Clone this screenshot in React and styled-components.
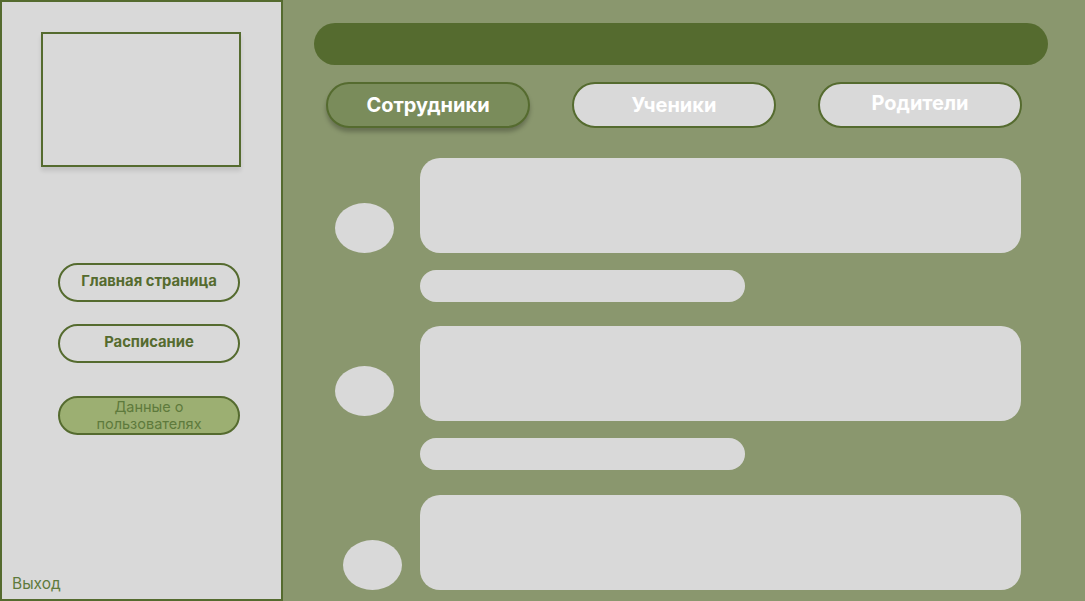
import styled, { createGlobalStyle } from "styled-components";

const GlobalStyle = createGlobalStyle`
  body {
    margin: 0;
    font-family: Inter, "Noto Sans", sans-serif;
  }
`;

const Page = styled.div`
  display: flex;
  width: 1085px;
  height: 601px;
  background: #8a976e;
  overflow: hidden;
`;

const Sidebar = styled.aside`
  box-sizing: border-box;
  width: 283px;
  height: 100%;
  flex-shrink: 0;
  background: #d9d9d9;
  border: 2px solid #556b2f;
  display: flex;
  flex-direction: column;
  padding-top: 30px;
`;

const PhotoBox = styled.div`
  box-sizing: border-box;
  width: 200px;
  height: 135px;
  margin-left: 39px;
  border: 2px solid #556b2f;
  box-shadow: 0 4px 4px rgba(0, 0, 0, 0.1);
`;

const Nav = styled.nav`
  display: flex;
  flex-direction: column;
  margin: 96px 0 0 56px;
`;

const NavButton = styled.button`
  box-sizing: border-box;
  width: 182px;
  height: 39px;
  margin-bottom: ${(p) => p.$gap || 0}px;
  border: 2px solid #556b2f;
  border-radius: 20px;
  background: ${(p) => (p.$active ? "#9caf72" : "transparent")};
  color: ${(p) => (p.$active ? "#5e7a3c" : "#556b2f")};
  font-family: inherit;
  font-size: ${(p) => (p.$active ? "14.5px" : "14.8px")};
  font-weight: ${(p) => (p.$active ? 400 : 700)};
  line-height: 17px;
  padding: 0 8px ${(p) => (p.$active ? 1 : 3)}px;
  cursor: pointer;
`;

const ExitLink = styled.a`
  margin-top: auto;
  padding: 0 0 6px 10px;
  color: #5e7a3c;
  font-size: 15.5px;
`;

const Main = styled.main`
  flex: 1;
  min-width: 0;
  padding: 23px 37px 0 31px;
  display: flex;
  flex-direction: column;
`;

const SearchBar = styled.div`
  flex-shrink: 0;
  height: 42px;
  border-radius: 21px;
  background: #556b2f;
`;

const Tabs = styled.div`
  flex-shrink: 0;
  display: flex;
  gap: 42px;
  margin: 17px 0 0 12px;
`;

const Tab = styled.button`
  box-sizing: border-box;
  width: 204px;
  height: 46px;
  border: 2px solid #556b2f;
  border-radius: 23px;
  background: ${(p) => (p.$active ? "#7a8c5b" : "#d9d9d9")};
  box-shadow: ${(p) => (p.$active ? "0 4px 4px rgba(0, 0, 0, 0.25)" : "none")};
  color: #ffffff;
  font-family: inherit;
  font-size: 20px;
  font-weight: 700;
  padding: 0 0 ${(p) => p.$lift || 0}px;
  cursor: pointer;
`;

const List = styled.div`
  flex-shrink: 0;
  display: flex;
  flex-direction: column;
  margin-top: 30px;
`;

const Row = styled.div`
  flex-shrink: 0;
  display: grid;
  grid-template-columns: 106px 601px;
  grid-template-rows: 95px auto;
  row-gap: 17px;
  margin-top: ${(p) => p.$top || 0}px;
`;

const Avatar = styled.div`
  width: 59px;
  height: 50px;
  border-radius: 50%;
  background: #d9d9d9;
  align-self: end;
  margin: 0 0 ${(p) => p.$lift || 0}px ${(p) => 21 + (p.$shift || 0)}px;
`;

const Card = styled.div`
  border-radius: 20px;
  background: #d9d9d9;
`;

const Caption = styled.div`
  grid-column: 2;
  width: 325px;
  height: 32px;
  border-radius: 16px;
  background: #d9d9d9;
`;

const rows = [
  { top: 0, lift: 0, shift: 0, caption: true },
  { top: 24, lift: 5, shift: 0, caption: true },
  { top: 25, lift: 0, shift: 8, caption: false },
];

function App() {
  return (
    <>
      <GlobalStyle />
      <Page>
        <Sidebar>
          <PhotoBox />
          <Nav>
            <NavButton $gap={22}>Главная страница</NavButton>
            <NavButton $gap={33}>Расписание</NavButton>
            <NavButton $active>Данные о пользователях</NavButton>
          </Nav>
          <ExitLink>Выход</ExitLink>
        </Sidebar>
        <Main>
          <SearchBar />
          <Tabs>
            <Tab $active>Сотрудники</Tab>
            <Tab>Ученики</Tab>
            <Tab $lift={4}>Родители</Tab>
          </Tabs>
          <List>
            {rows.map((r, i) => (
              <Row key={i} $top={r.top}>
                <Avatar $lift={r.lift} $shift={r.shift} />
                <Card />
                {r.caption && <Caption />}
              </Row>
            ))}
          </List>
        </Main>
      </Page>
    </>
  );
}

export default App;
